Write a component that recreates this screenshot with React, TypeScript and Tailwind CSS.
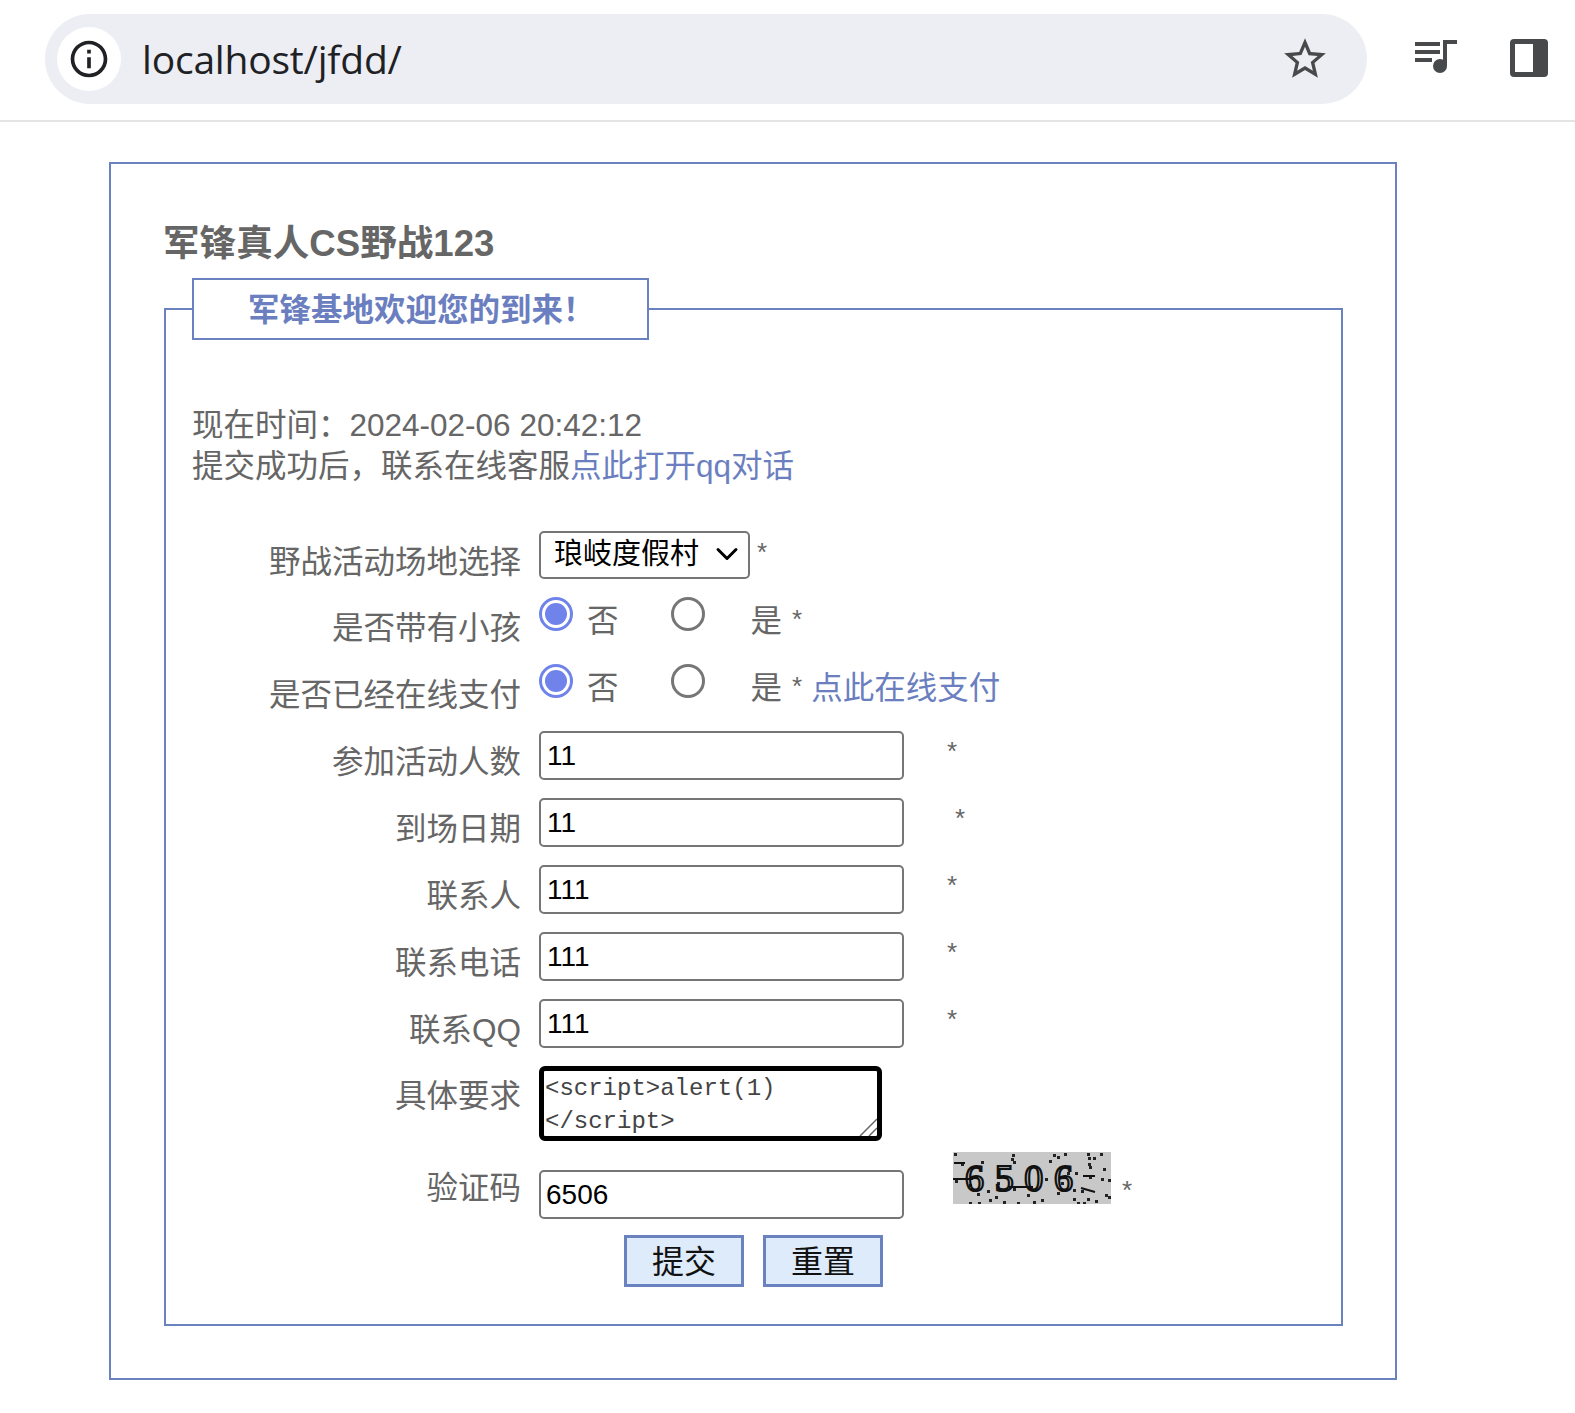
import { ChevronDown } from 'lucide-react';

const FONT = "font-['Liberation_Sans','Noto_Sans_CJK_SC',sans-serif]";

// speckles of the captcha image
const NOISE = [
  [1, 1], [59, 2], [58, 6], [100, 2], [104, 4], [111, 1], [134, 1], [135, 5], [140, 5], [147, 1],
  [60, 9], [96, 8], [135, 11], [136, 14], [150, 16], [8, 11], [28, 9], [44, 19], [122, 20], [136, 24],
  [148, 26], [155, 27], [2, 28], [16, 32], [44, 30], [92, 26], [108, 30], [114, 20], [128, 38], [152, 42],
  [24, 41], [60, 36], [74, 42], [104, 40], [120, 37], [142, 48], [155, 44], [16, 50], [25, 50], [36, 47],
  [50, 49], [64, 50], [80, 49], [88, 47], [120, 46], [124, 50], [130, 50], [134, 46], [42, 44], [34, 38],
];

function Row({ label, labelClass, rowClass, children }: { label: string; labelClass: string; rowClass: string; children: React.ReactNode }) {
  return (
    <div className={`flex items-start ${rowClass}`}>
      <div className={`w-[329px] shrink-0 text-right leading-[42px] ${labelClass}`}>{label}</div>
      <div className="ml-[18px] flex items-start">{children}</div>
    </div>
  );
}

function Radio({ checked }: { checked?: boolean }) {
  return checked ? (
    <span className="flex h-[34px] w-[34px] shrink-0 items-center justify-center rounded-full border-[3px] border-[#6f83ea]">
      <span className="h-[22px] w-[22px] rounded-full bg-[#6f83ea]" />
    </span>
  ) : (
    <span className="ml-[52px] block h-[34px] w-[34px] shrink-0 rounded-full border-[3px] border-[#767676]" />
  );
}

function Choice() {
  return (
    <>
      <Radio checked />
      <span className="ml-[14px] mt-[3px] leading-[42px]">否</span>
      <Radio />
      <span className="ml-[46px] mt-[3px] leading-[42px]">是</span>
      <span className="ml-[10px] mt-[9px] text-[26px] leading-[26px]">*</span>
    </>
  );
}

function TextRow({ label, value, starClass }: { label: string; value: string; starClass: string }) {
  return (
    <Row label={label} labelClass="pt-[10px]" rowClass="h-[67px]">
      <input
        defaultValue={value}
        className="h-[49px] w-[365px] rounded-[5px] border-2 border-[#767676] bg-white pl-[6px] text-[28px] text-black outline-none"
      />
      <span className={`mt-[7px] text-[26px] leading-[26px] ${starClass}`}>*</span>
    </Row>
  );
}

export default function App() {
  return (
    <div className={`min-h-[1413px] bg-white text-[31.5px] text-[#666] ${FONT}`}>
      <div className="h-[122px] border-b-2 border-[#e4e4e4] pt-[14px]">
        <div className="flex items-center">
          <div className="ml-[45px] flex h-[90px] w-[1322px] items-center rounded-full bg-[#edeef3] pl-[12px] pr-[37px]">
            <span className="flex h-[64px] w-[64px] items-center justify-center rounded-full bg-white">
              <svg className="h-[44px] w-[44px]" viewBox="0 0 24 24" fill="#202124">
                <path d="M11 7h2v2h-2zm0 4h2v6h-2zm1-9C6.48 2 2 6.48 2 12s4.48 10 10 10 10-4.48 10-10S17.52 2 12 2zm0 18c-4.41 0-8-3.59-8-8s3.59-8 8-8 8 3.59 8 8-3.59 8-8 8z" />
              </svg>
            </span>
            <span className="ml-[21px] font-['Open_Sans',sans-serif] text-[39px] tracking-[-0.2px] text-[#202124]">localhost/jfdd/</span>
            <svg className="ml-auto h-[50px] w-[50px]" viewBox="0 0 24 24" fill="#48494b">
              <path d="M22 9.24l-7.19-.62L12 2 9.19 8.63 2 9.24l5.46 4.73L5.82 21 12 17.27 18.18 21l-1.63-7.03L22 9.24zM12 15.4l-3.76 2.27 1-4.28-3.32-2.88 4.38-.38L12 6.1l1.71 4.04 4.38.38-3.32 2.88 1 4.28L12 15.4z" />
            </svg>
          </div>
          <svg className="mb-[4px] ml-[48px] h-[36px] w-[42px]" viewBox="0 0 42 36" fill="#48494b">
            <rect x="0" y="3" width="25" height="4" />
            <rect x="0" y="11" width="25" height="4" />
            <rect x="0" y="19" width="17" height="4" />
            <rect x="28" y="1" width="14" height="4" />
            <rect x="28" y="1" width="4" height="26" />
            <circle cx="25" cy="27" r="7" />
          </svg>
          <svg className="mb-[2px] ml-[53px] h-[38px] w-[38px]" viewBox="0 0 38 38">
            <rect x="0" y="0" width="38" height="38" rx="4" fill="#48494b" />
            <rect x="5" y="5" width="18" height="28" fill="#fff" />
          </svg>
        </div>
      </div>

      <div className="ml-[109px] mt-[40px] h-[1218px] w-[1288px] border-2 border-[#6b82c0] pl-[52px]">
        <h1 className="mt-[57px] h-[57px] text-[36.6px] font-bold leading-[46px]">军锋真人CS野战123</h1>
        <fieldset className="ml-px h-[1048px] w-[1179px] border-2 border-[#6b82c0] pl-[26px]">
          <legend className="h-[62px] w-[457px] border-2 border-[#6b82c0] pl-[54px] text-[31.5px] font-bold leading-[60px] text-[#6b7fc0]">
            军锋基地欢迎您的到来！
          </legend>
          <div className="mt-[65px] leading-[41px]">
            <div>现在时间：2024-02-06 20:42:12</div>
            <div>提交成功后，联系在线客服<a className="text-[#6b7fc0]">点此打开qq对话</a></div>
          </div>

          <div className="mt-[43px]">
            <Row label="野战活动场地选择" labelClass="pt-[11px]" rowClass="h-[67px]">
              <div className="relative">
                <select className="h-[48px] w-[211px] appearance-none rounded-[5px] border-2 border-[#767676] bg-white pl-[13px] text-[29px] text-black outline-none">
                  <option>琅岐度假村</option>
                </select>
                <ChevronDown className="pointer-events-none absolute right-[5px] top-[6px] h-[36px] w-[36px] text-black" strokeWidth={2} />
              </div>
              <span className="ml-[7px] mt-[9px] text-[26px] leading-[26px]">*</span>
            </Row>
            <Row label="是否带有小孩" labelClass="pt-[10px]" rowClass="h-[67px]">
              <Choice />
            </Row>
            <Row label="是否已经在线支付" labelClass="pt-[10px]" rowClass="h-[67px]">
              <Choice />
              <a className="ml-[9px] mt-[3px] leading-[42px] text-[#6b7fc0]">点此在线支付</a>
            </Row>
            <TextRow label="参加活动人数" value="11" starClass="ml-[43px]" />
            <TextRow label="到场日期" value="11" starClass="ml-[51px]" />
            <TextRow label="联系人" value="111" starClass="ml-[43px]" />
            <TextRow label="联系电话" value="111" starClass="ml-[43px]" />
            <TextRow label="联系QQ" value="111" starClass="ml-[43px]" />
            <Row label="具体要求" labelClass="pt-[9px]" rowClass="h-[86px]">
              <div className="relative">
                <textarea
                  defaultValue={'<script>alert(1)\n</script>'}
                  className="block h-[75px] w-[343px] resize-none overflow-hidden rounded-[6px] border-[5px] border-black bg-white pl-[1px] pt-[1px] font-['Liberation_Mono',monospace] text-[24px] leading-[33px] text-[#444] outline-none"
                />
                <svg className="absolute bottom-[5px] right-[5px] h-[18px] w-[18px]" viewBox="0 0 18 18" fill="none" stroke="#666" strokeWidth="1.5">
                  <path d="M1 18 18 1M10 18 18 10" />
                </svg>
              </div>
            </Row>
            <Row label="验证码" labelClass="pt-[15px]" rowClass="h-[83px]">
              <input
                defaultValue="6506"
                className="mt-[18px] h-[49px] w-[365px] rounded-[5px] border-2 border-[#767676] bg-white pl-[5px] text-[28px] text-black outline-none"
              />
              <svg className="ml-[49px] h-[52px] w-[158px]" viewBox="0 0 158 52">
                <rect width="158" height="52" fill="#c8c8c8" />
                {NOISE.map(([x, y]) => (
                  <rect key={`${x}-${y}`} x={x} y={y} width="3" height="3" fill="#222" />
                ))}
                <path d="M1 11H12M0 27H20M56 35H80M130 24H142M128 36 142 40" stroke="#111" strokeWidth="2" />
                <text x="12" y="39" fontFamily="'Liberation Serif', serif" fontSize="38" fill="none" stroke="#111" strokeWidth="2.2" textLength="108">6506</text>
              </svg>
              <span className="ml-[11px] mt-[25px] text-[26px] leading-[26px]">*</span>
            </Row>
            <div className="ml-[432px] flex gap-[19px]">
              <button className="h-[52px] w-[120px] border-[3px] border-[#6b82c0] bg-[#deebfa] text-[32px] text-[#111]">提交</button>
              <button className="h-[52px] w-[120px] border-[3px] border-[#6b82c0] bg-[#deebfa] text-[32px] text-[#111]">重置</button>
            </div>
          </div>
        </fieldset>
      </div>
    </div>
  );
}
